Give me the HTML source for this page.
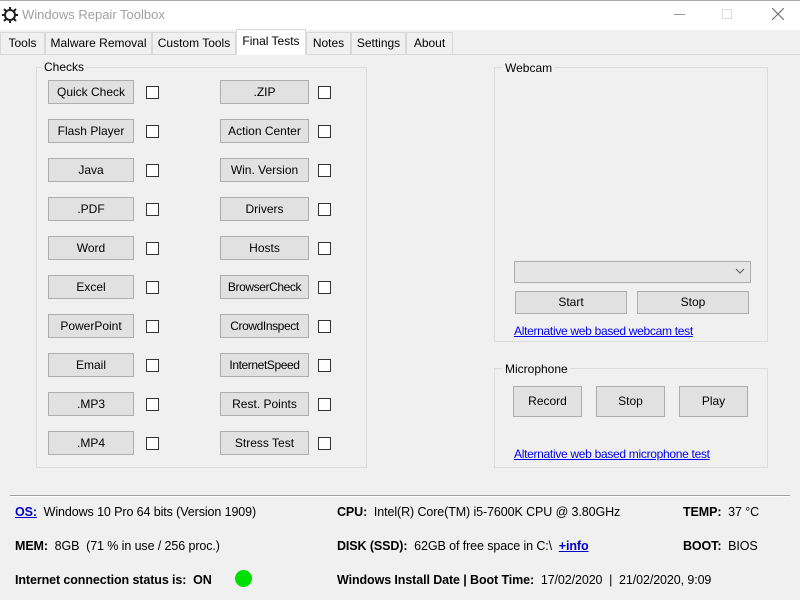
<!DOCTYPE html>
<html><head><meta charset="utf-8"><style>
*{box-sizing:border-box;margin:0;padding:0}
body{width:800px;height:600px;overflow:hidden;background:#f0f0f0;font-family:"Liberation Sans",sans-serif;font-size:12px;color:#000;position:relative}
.a{position:absolute}
.title{left:0;top:0;width:800px;height:30px;background:#fff;border-top:1px solid #aaa}
.tab{position:absolute;top:32px;height:22px;border:1px solid #d9d9d9;border-bottom:none;background:#f0f0f0;text-align:center;line-height:20px;font-size:12px}
.tab.sel{top:29px;height:26px;background:#fff;line-height:22px}
.grp{position:absolute;border:1px solid #dcdcdc}
.lbl{position:absolute;background:#f0f0f0;padding:0 2px;font-size:12px}
.btn{position:absolute;background:#e1e1e1;border:1px solid #adadad;text-align:center;font-size:12px}
.cb{position:absolute;width:13px;height:13px;border:1px solid #333;background:#fff}
.lnk{position:absolute;color:#0000ee;text-decoration:underline;font-size:12px;letter-spacing:-0.3px}
.b{font-weight:bold}
.t{position:absolute;font-size:12.5px;letter-spacing:-0.1px}
</style></head><body>
<div class="a title"></div>
<svg class="a" style="left:1px;top:6px" width="18" height="18" viewBox="0 0 18 18"><g fill="none" stroke="#222" stroke-width="2"><circle cx="9" cy="9" r="5"/><path d="M9 1v4M9 13v4M1 9h4M13 9h4M3 3l3 3M12 12l3 3M15 3l-3 3M3 15l3-3"/></g></svg>
<div class="a" style="left:22px;top:7px;font-size:13px;color:#a0a0a0">Windows Repair Toolbox</div>
<div class="a" style="left:674px;top:14px;width:11px;height:1px;background:#999"></div>
<div class="a" style="left:722px;top:9px;width:10px;height:10px;border:1px solid #ddd"></div>
<svg class="a" style="left:772px;top:8px" width="12" height="12"><path d="M0 0L12 12M12 0L0 12" stroke="#777" stroke-width="1.2"/></svg>

<div class="a" style="left:0;top:54px;width:800px;height:1px;background:#d9d9d9"></div>
<div class="tab" style="left:0;width:45px">Tools</div>
<div class="tab" style="left:45px;width:107px">Malware Removal</div>
<div class="tab" style="left:152px;width:84px">Custom Tools</div>
<div class="tab sel" style="left:236px;width:70px">Final Tests</div>
<div class="tab" style="left:306px;width:45px">Notes</div>
<div class="tab" style="left:351px;width:55px">Settings</div>
<div class="tab" style="left:406px;width:47px">About</div>

<div class="grp" style="left:36px;top:67px;width:331px;height:401px"></div>
<div class="lbl" style="left:42px;top:60px">Checks</div>

<div class="btn" style="left:48px;top:80px;width:86px;height:24px;line-height:22px">Quick Check</div><div class="cb" style="left:146px;top:86px"></div>
<div class="btn" style="left:48px;top:119px;width:86px;height:24px;line-height:22px">Flash Player</div><div class="cb" style="left:146px;top:125px"></div>
<div class="btn" style="left:48px;top:158px;width:86px;height:24px;line-height:22px">Java</div><div class="cb" style="left:146px;top:164px"></div>
<div class="btn" style="left:48px;top:197px;width:86px;height:24px;line-height:22px">.PDF</div><div class="cb" style="left:146px;top:203px"></div>
<div class="btn" style="left:48px;top:236px;width:86px;height:24px;line-height:22px">Word</div><div class="cb" style="left:146px;top:242px"></div>
<div class="btn" style="left:48px;top:275px;width:86px;height:24px;line-height:22px">Excel</div><div class="cb" style="left:146px;top:281px"></div>
<div class="btn" style="left:48px;top:314px;width:86px;height:24px;line-height:22px">PowerPoint</div><div class="cb" style="left:146px;top:320px"></div>
<div class="btn" style="left:48px;top:353px;width:86px;height:24px;line-height:22px">Email</div><div class="cb" style="left:146px;top:359px"></div>
<div class="btn" style="left:48px;top:392px;width:86px;height:24px;line-height:22px">.MP3</div><div class="cb" style="left:146px;top:398px"></div>
<div class="btn" style="left:48px;top:431px;width:86px;height:24px;line-height:22px">.MP4</div><div class="cb" style="left:146px;top:437px"></div>

<div class="btn" style="left:220px;top:80px;width:89px;height:24px;line-height:22px">.ZIP</div><div class="cb" style="left:318px;top:86px"></div>
<div class="btn" style="left:220px;top:119px;width:89px;height:24px;line-height:22px">Action Center</div><div class="cb" style="left:318px;top:125px"></div>
<div class="btn" style="left:220px;top:158px;width:89px;height:24px;line-height:22px">Win. Version</div><div class="cb" style="left:318px;top:164px"></div>
<div class="btn" style="left:220px;top:197px;width:89px;height:24px;line-height:22px">Drivers</div><div class="cb" style="left:318px;top:203px"></div>
<div class="btn" style="left:220px;top:236px;width:89px;height:24px;line-height:22px">Hosts</div><div class="cb" style="left:318px;top:242px"></div>
<div class="btn" style="left:220px;top:275px;width:89px;height:24px;line-height:22px;letter-spacing:-0.4px">BrowserCheck</div><div class="cb" style="left:318px;top:281px"></div>
<div class="btn" style="left:220px;top:314px;width:89px;height:24px;line-height:22px;letter-spacing:-0.4px">CrowdInspect</div><div class="cb" style="left:318px;top:320px"></div>
<div class="btn" style="left:220px;top:353px;width:89px;height:24px;line-height:22px;letter-spacing:-0.4px">InternetSpeed</div><div class="cb" style="left:318px;top:359px"></div>
<div class="btn" style="left:220px;top:392px;width:89px;height:24px;line-height:22px">Rest. Points</div><div class="cb" style="left:318px;top:398px"></div>
<div class="btn" style="left:220px;top:431px;width:89px;height:24px;line-height:22px">Stress Test</div><div class="cb" style="left:318px;top:437px"></div>

<div class="grp" style="left:494px;top:67px;width:274px;height:275px"></div>
<div class="lbl" style="left:503px;top:61px">Webcam</div>
<div class="a" style="left:514px;top:261px;width:237px;height:22px;background:#e5e5e5;border:1px solid #adadad"></div>
<svg class="a" style="left:735px;top:268px" width="10" height="6"><path d="M1 1l4 4 4-4" fill="none" stroke="#555"/></svg>
<div class="btn" style="left:515px;top:291px;width:112px;height:23px;line-height:21px">Start</div>
<div class="btn" style="left:637px;top:291px;width:112px;height:23px;line-height:21px">Stop</div>
<div class="lnk" style="left:514px;top:324px">Alternative web based webcam test</div>

<div class="grp" style="left:494px;top:368px;width:274px;height:100px"></div>
<div class="lbl" style="left:503px;top:362px">Microphone</div>
<div class="btn" style="left:513px;top:386px;width:69px;height:31px;line-height:29px">Record</div>
<div class="btn" style="left:596px;top:386px;width:69px;height:31px;line-height:29px">Stop</div>
<div class="btn" style="left:679px;top:386px;width:69px;height:31px;line-height:29px">Play</div>
<div class="lnk" style="left:514px;top:447px">Alternative web based microphone test</div>

<div class="a" style="left:10px;top:495px;width:780px;height:1px;background:#a0a0a0"></div>
<div class="a" style="left:10px;top:496px;width:780px;height:1px;background:#fff"></div>

<div class="t" style="left:15px;top:505px"><span class="b" style="color:#0000cc;text-decoration:underline">OS:</span>&nbsp; Windows 10 Pro 64 bits (Version 1909)</div>
<div class="t" style="left:337px;top:505px"><span class="b">CPU:</span>&nbsp; Intel(R) Core(TM) i5-7600K CPU @ 3.80GHz</div>
<div class="t" style="left:683px;top:505px"><span class="b">TEMP:</span>&nbsp; 37 °C</div>
<div class="t" style="left:15px;top:539px"><span class="b">MEM:</span>&nbsp; 8GB&nbsp; (71 % in use / 256 proc.)</div>
<div class="t" style="left:337px;top:539px"><span class="b">DISK (SSD):</span>&nbsp; 62GB of free space in C:\&nbsp; <span class="b" style="color:#0000cc;text-decoration:underline">+info</span></div>
<div class="t" style="left:683px;top:539px"><span class="b">BOOT:</span>&nbsp; BIOS</div>
<div class="t b" style="left:15px;top:573px">Internet connection status is:&nbsp; ON</div>
<div class="a" style="left:235px;top:570px;width:17px;height:17px;border-radius:50%;background:#00e000"></div>
<div class="t" style="left:337px;top:573px"><span class="b">Windows Install Date | Boot Time:</span>&nbsp; 17/02/2020&nbsp; |&nbsp; 21/02/2020, 9:09</div>
</body></html>
